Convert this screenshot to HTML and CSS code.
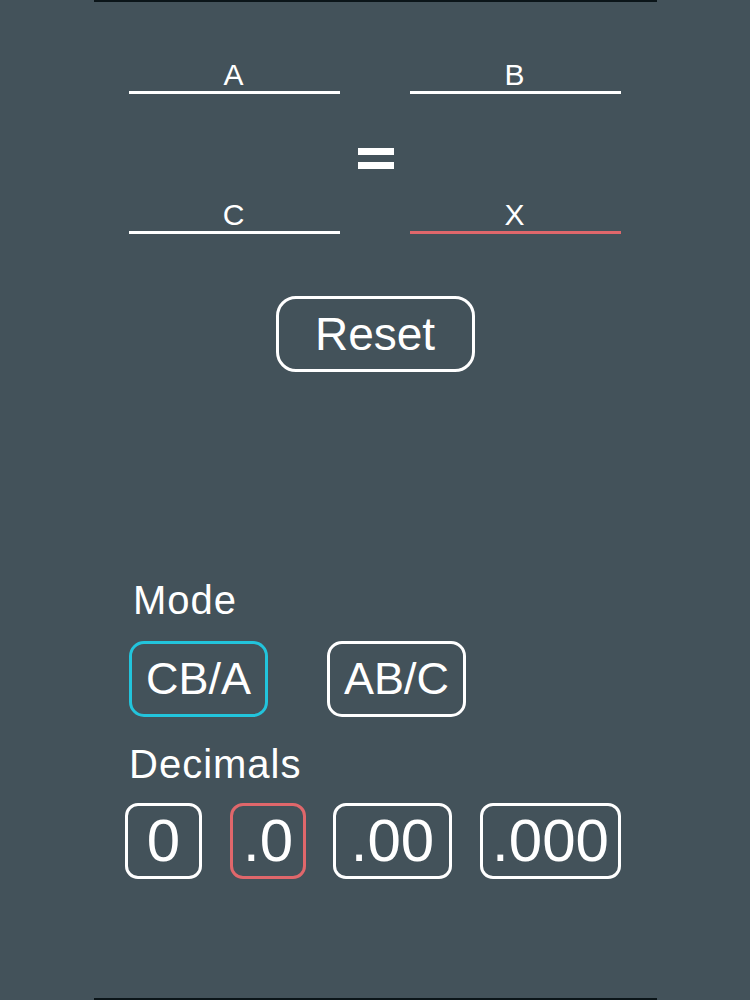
FILE: index.html
```html
<!DOCTYPE html>
<html lang="en">
<head>
<meta charset="utf-8">
<title>Proportion</title>
<link rel="stylesheet" href="styles.css">
</head>
<body>
<div class="screen">
  <div class="edge"></div>

  <div class="equation">
    <div class="field"><span class="label">A</span></div>
    <div class="field"><span class="label">B</span></div>
    <div class="equals" aria-label="="><span class="bar"></span><span class="bar"></span></div>
    <div class="field"><span class="label">C</span></div>
    <div class="field field-result"><span class="label">X</span></div>
  </div>

  <div class="reset-row">
    <button class="btn btn-reset">Reset</button>
  </div>

  <div class="settings">
    <div class="section-title mode-title">Mode</div>
    <div class="mode-row">
      <button class="btn btn-mode is-active">CB/A</button>
      <button class="btn btn-mode">AB/C</button>
    </div>

    <div class="section-title dec-title">Decimals</div>
    <div class="dec-row">
      <button class="btn btn-dec dec-0">0</button>
      <button class="btn btn-dec dec-1 is-selected">.0</button>
      <button class="btn btn-dec dec-2">.00</button>
      <button class="btn btn-dec dec-3">.000</button>
    </div>
  </div>

  <div class="edge edge-bottom"></div>
</div>
</body>
</html>
```

FILE: styles.css
```css
* { box-sizing: border-box; }

html, body {
  margin: 0;
  padding: 0;
  background: #43525a;
}

body {
  font-family: "Liberation Sans", Arial, Helvetica, sans-serif;
  color: #ffffff;
}

.screen {
  min-height: 1000px;
  display: flex;
  flex-direction: column;
}

.edge {
  width: 563px;
  height: 2px;
  margin: 0 auto;
  background: #0b1519;
  flex: none;
}

.edge-bottom {
  margin-top: auto;
}

/* equation */
.equation {
  width: 492px;
  margin: 58px auto 0;
  display: grid;
  grid-template-columns: 211px 211px;
  column-gap: 70px;
}

.field {
  height: 34px;
  padding-bottom: 1px;
  border-bottom: 3px solid #ffffff;
  text-align: center;
  font-size: 30px;
  line-height: 30px;
}

.field-result {
  border-bottom-color: #e0676b;
}

.label {
  display: inline-block;
  transform: translateX(-1px);
}

.equals {
  grid-column: 1 / 3;
  height: 106px;
  display: flex;
  flex-direction: column;
  align-items: center;
  gap: 7px;
  padding-top: 54px;
}

.equals .bar {
  display: block;
  width: 36px;
  height: 7px;
  background: #ffffff;
  transform: translateX(1px);
}

/* buttons */
.btn {
  font-family: inherit;
  color: #ffffff;
  background: transparent;
  border: 3px solid #ffffff;
  height: 76px;
  padding: 0;
  margin: 0;
  text-align: center;
}

.reset-row {
  display: flex;
  justify-content: center;
  margin-top: 62px;
}

.btn-reset {
  width: 199px;
  border-radius: 20px;
  font-size: 46px;
  line-height: 70px;
}

/* settings */
.settings {
  width: 497px;
  margin: 209px 0 0 125px;
}

.section-title {
  font-size: 40px;
  line-height: 38px;
  letter-spacing: 1px;
}

.mode-title {
  padding-left: 8px;
}

.mode-row {
  display: flex;
  gap: 59px;
  margin-top: 22px;
  padding-left: 4px;
}

.btn-mode {
  width: 139px;
  border-radius: 15px;
  font-size: 45px;
  line-height: 70px;
}

.btn-mode.is-active {
  border-color: #22c4dc;
}

.dec-title {
  margin-top: 28px;
  padding-left: 4px;
}

.dec-row {
  display: flex;
  gap: 28px;
  margin-top: 20px;
}

.btn-dec {
  border-radius: 13px;
  font-size: 60px;
  line-height: 70px;
}

.dec-0 { width: 77px; }
.dec-1 { width: 76px; }
.dec-2 { width: 119px; margin-left: -1px; }
.dec-3 { width: 141px; }

.btn-dec.is-selected {
  border-color: #e0676b;
}
```
